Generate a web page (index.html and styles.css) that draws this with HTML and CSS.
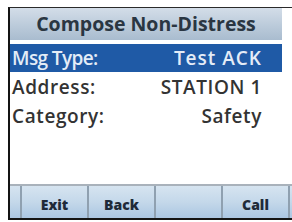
FILE: index.html
```html
<!DOCTYPE html>
<html>
<head>
<meta charset="utf-8">
<link rel="stylesheet" href="styles.css">
</head>
<body>
<div class="screen">
  <div class="header">Compose Non-Distress</div>
  <div class="list">
    <div class="row selected"><span class="label">Msg Type:</span><span class="value">Test ACK</span></div>
    <div class="row"><span class="label">Address:</span><span class="value">STATION 1</span></div>
    <div class="row"><span class="label">Category:</span><span class="value">Safety</span></div>
  </div>
  <div class="softkeys">
    <div class="key stub"></div>
    <div class="key">Exit</div>
    <div class="key">Back</div>
    <div class="key"></div>
    <div class="key">Call</div>
    <div class="key stub"></div>
  </div>
</div>
</body>
</html>
```
FILE: styles.css
```css
html, body {
  margin: 0;
  padding: 0;
  background: #ffffff;
}
body {
  width: 292px;
  height: 222px;
  overflow: hidden;
  font-family: "Open Sans", "Noto Sans", sans-serif;
}
.screen {
  margin: 7px 0 0 8px;
  height: 210px;
  border-top: 1px solid #2a2a2a;
  border-left: 2px solid #141414;
  border-bottom: 2px solid #141414;
  display: flex;
  flex-direction: column;
  background: #ffffff;
}
.header {
  height: 32px;
  margin-right: 10px;
  background: linear-gradient(#d3dde8, #b9c9d9 60%, #a9bccf);
  color: #2a3642;
  font-weight: 700;
  font-size: 19.5px;
  line-height: 32px;
  text-align: center;
}
.list {
  margin-top: 4px;
  flex: 1;
  display: flex;
  flex-direction: column;
}
.row {
  height: 29px;
  margin-right: 10px;
  padding: 0 20px 0 2px;
  display: flex;
  justify-content: space-between;
  align-items: center;
  font-size: 19px;
  font-weight: 600;
  letter-spacing: 0.6px;
  color: #333333;
}
.row.selected {
  height: 28px;
  background: #1f5aa6;
  color: #e4ecf7;
}
.row.selected .label {
  letter-spacing: -0.6px;
}
.row.selected .value {
  letter-spacing: 1px;
}
.softkeys {
  height: 32px;
  border-top: 2px solid #a9b2bb;
  background: linear-gradient(#d6e4f0, #c4d8ea 50%, #abc6e2);
  display: flex;
}
.key {
  width: 65px;
  border-right: 2px solid #8fa0b0;
  display: flex;
  align-items: center;
  justify-content: center;
  padding-top: 5px;
  font-size: 14px;
  font-weight: 800;
  color: #1f2a38;
}
.key.stub {
  width: 10px;
}
.key:last-child {
  border-right: none;
  flex: 1;
}
```
